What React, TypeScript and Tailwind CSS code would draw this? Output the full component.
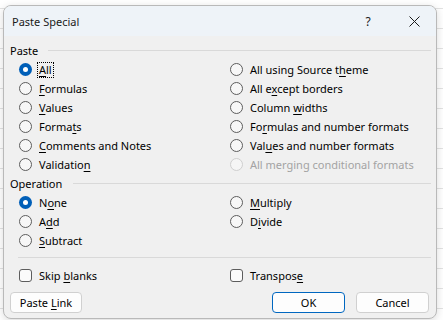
import React from "react";

const FONT = "font-['Noto_Sans',sans-serif]";

function Radio({ checked, disabled }: { checked?: boolean; disabled?: boolean }) {
  if (checked)
    return (
      <span className="w-[13px] h-[13px] shrink-0 rounded-full bg-[#005fb8] flex items-center justify-center">
        <span className="w-[5px] h-[5px] rounded-full bg-white" />
      </span>
    );
  return (
    <span
      className={
        disabled
          ? "w-[13px] h-[13px] shrink-0 rounded-full border border-[#cfcfcf] bg-[#f5f5f5]"
          : "w-[13px] h-[13px] shrink-0 rounded-full border border-[#5d5d5d] bg-[#f7f7f7]"
      }
    />
  );
}

function Check() {
  return <span className="w-[13px] h-[13px] shrink-0 rounded-[3px] border border-[#5d5d5d] bg-[#fbfbfb]" />;
}

type Lbl = { pre: string; u?: string; post?: string };

function Label({ l, disabled, focus }: { l: Lbl; disabled?: boolean; focus?: boolean }) {
  const text = (
    <>
      {l.pre}
      {l.u && <u className="underline-offset-[2px]">{l.u}</u>}
      {l.post}
    </>
  );
  if (focus)
    return (
      <span className="-ml-[2px] px-[1px] leading-[14px] border border-dotted border-black">{text}</span>
    );
  return <span className={disabled ? "text-[#a3a3a3]" : "text-black"}>{text}</span>;
}

function RadioRow({ l, checked, disabled, focus }: { l: Lbl; checked?: boolean; disabled?: boolean; focus?: boolean }) {
  return (
    <div className="h-[19px] flex items-center gap-[7px]">
      <Radio checked={checked} disabled={disabled} />
      <Label l={l} disabled={disabled} focus={focus} />
    </div>
  );
}

function Header({ label, lineGap }: { label: string; lineGap: string }) {
  return (
    <div className="h-[19px] flex items-center">
      <span className="text-black">{label}</span>
      <span className={`flex-1 h-px bg-[#d9d9d9] ${lineGap}`} />
    </div>
  );
}

export default function App() {
  return (
    <div
      className={`w-[443px] h-[320px] overflow-hidden bg-white bg-[repeating-linear-gradient(to_bottom,transparent_0,transparent_8px,#e3e3e3_8px,#e3e3e3_9px,transparent_9px,transparent_20px)] pt-[5px] pl-[3px] ${FONT} text-[11px] leading-[19px]`}
    >
      <div className="w-[434px] h-[314px] rounded-[8px] border border-[#b9b9b9] bg-[#f0f0f0] overflow-hidden flex flex-col shadow-[0_2px_8px_rgba(0,0,0,0.15)]">
        {/* Title bar */}
        <div className="h-[30px] shrink-0 bg-[#eef3f8] flex items-center pl-[8px]">
          <span className="flex-1 text-[11px] text-[#1a1a1a]">Paste Special</span>
          <span className="w-[30px] mr-[9px] text-center text-[12px] text-[#1a1a1a]">?</span>
          <span className="w-[44px] flex items-center justify-center">
            <svg width="11" height="11" viewBox="0 0 11 11">
              <path d="M0.5 0.5 L10.5 10.5 M10.5 0.5 L0.5 10.5" stroke="#1a1a1a" strokeWidth="1" />
            </svg>
          </span>
        </div>

        {/* Body */}
        <div className="flex-1 flex flex-col pl-[6px] pr-[5px] pt-[5px]">
          <Header label="Paste" lineGap="ml-[10px]" />
          <div className="grid grid-cols-[211px_1fr] pl-[9px]">
            <RadioRow l={{ pre: "", u: "A", post: "ll" }} checked focus />
            <RadioRow l={{ pre: "All using Source t", u: "h", post: "eme" }} />
            <RadioRow l={{ pre: "", u: "F", post: "ormulas" }} />
            <RadioRow l={{ pre: "All e", u: "x", post: "cept borders" }} />
            <RadioRow l={{ pre: "", u: "V", post: "alues" }} />
            <RadioRow l={{ pre: "Column ", u: "w", post: "idths" }} />
            <RadioRow l={{ pre: "Forma", u: "t", post: "s" }} />
            <RadioRow l={{ pre: "Fo", u: "r", post: "mulas and number formats" }} />
            <RadioRow l={{ pre: "", u: "C", post: "omments and Notes" }} />
            <RadioRow l={{ pre: "Val", u: "u", post: "es and number formats" }} />
            <RadioRow l={{ pre: "Validatio", u: "n", post: "" }} />
            <RadioRow l={{ pre: "All merging conditional formats" }} disabled />
          </div>

          <Header label="Operation" lineGap="ml-[11px]" />
          <div className="grid grid-cols-[211px_1fr] pl-[9px]">
            <RadioRow l={{ pre: "N", u: "o", post: "ne" }} checked />
            <RadioRow l={{ pre: "", u: "M", post: "ultiply" }} />
            <RadioRow l={{ pre: "A", u: "d", post: "d" }} />
            <RadioRow l={{ pre: "D", u: "i", post: "vide" }} />
            <RadioRow l={{ pre: "", u: "S", post: "ubtract" }} />
            <div />
          </div>

          <div className="mt-[7px] ml-[8px] h-px bg-[#d9d9d9]" />

          <div className="mt-[8px] grid grid-cols-[211px_1fr] pl-[9px]">
            <div className="h-[19px] flex items-center gap-[7px]">
              <Check />
              <span>
                Skip <u className="underline-offset-[2px]">b</u>lanks
              </span>
            </div>
            <div className="h-[19px] flex items-center gap-[7px]">
              <Check />
              <span>
                Transpos<u className="underline-offset-[2px]">e</u>
              </span>
            </div>
          </div>

          <div className="mt-[7px] flex items-center">
            <button className="w-[72px] h-[21px] rounded-[4px] border border-[#d0d0d0] bg-[#fdfdfd] text-[11px] leading-[19px] text-black">
              Paste <u className="underline-offset-[2px]">L</u>ink
            </button>
            <span className="flex-1" />
            <button className="w-[73px] h-[21px] rounded-[4px] border border-[#0067c0] bg-[#fdfdfd] text-[11px] leading-[19px] text-black">
              OK
            </button>
            <button className="ml-[11px] mr-[2px] w-[73px] h-[21px] rounded-[4px] border border-[#d0d0d0] bg-[#fdfdfd] text-[11px] leading-[19px] text-black">
              Cancel
            </button>
          </div>
        </div>
      </div>
    </div>
  );
}
